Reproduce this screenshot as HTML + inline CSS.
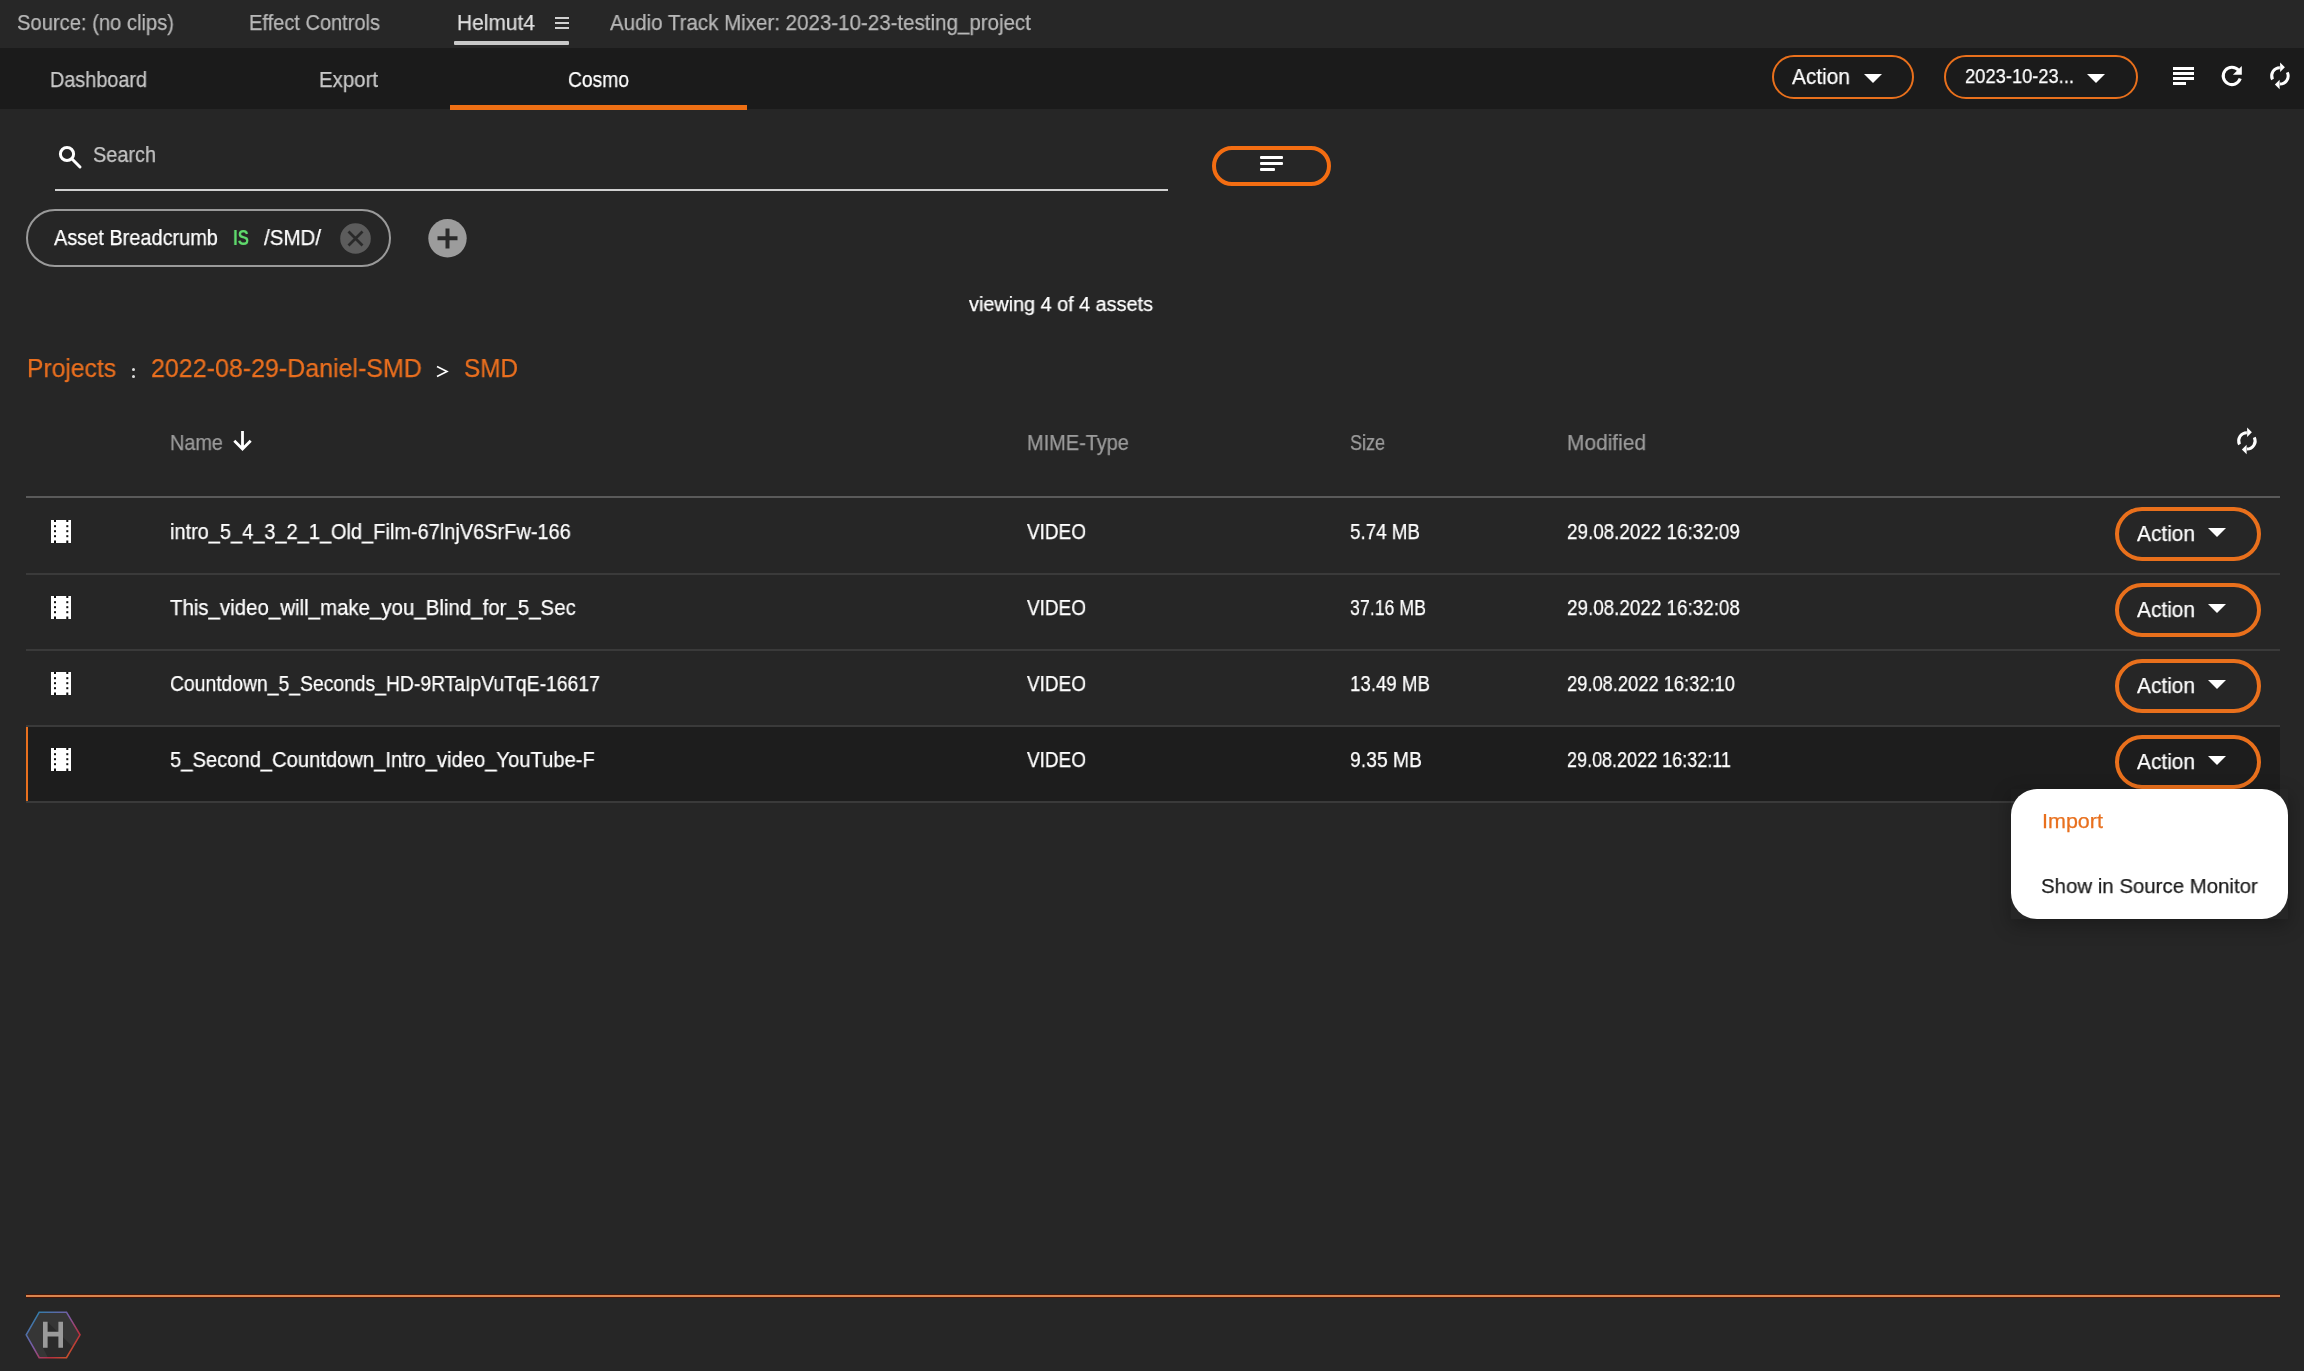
<!DOCTYPE html>
<html><head><meta charset="utf-8"><style>
html,body{margin:0;padding:0;}
body{width:2304px;height:1371px;position:relative;overflow:hidden;background:#262626;font-family:"Liberation Sans",sans-serif;}
.t{position:absolute;white-space:nowrap;margin:0;transform-origin:0 0;will-change:transform;}
.ab{position:absolute;display:block;}
.pill{position:absolute;border-radius:999px;}
</style></head><body>
<div class="ab" style="left:0;top:0;width:2304px;height:48px;background:#272727"></div>
<div class="ab" style="left:0;top:48px;width:2304px;height:61px;background:#1b1b1b"></div>
<div class="ab" style="left:454px;top:41px;width:115px;height:4px;background:#c8c8c8;border-radius:1px"></div>
<div class="ab" style="left:555px;top:17px;width:14px;height:2px;background:#d0d0d0"></div>
<div class="ab" style="left:555px;top:22px;width:14px;height:2px;background:#d0d0d0"></div>
<div class="ab" style="left:555px;top:27px;width:14px;height:2px;background:#d0d0d0"></div>
<div class="ab" style="left:450px;top:105px;width:297px;height:5px;background:#ee6f14"></div>
<div class="pill" style="left:1772px;top:55px;width:138.0px;height:40.0px;border:2.5px solid #e9701c;background:#1b1b1b"></div>
<svg class="ab" style="left:1864px;top:74px" width="18" height="9" viewBox="0 0 18 9"><path d="M0 0H18L9.0 9Z" fill="#fff"/></svg>
<div class="pill" style="left:1944px;top:55px;width:190.0px;height:40.0px;border:2.5px solid #e9701c;background:#1b1b1b"></div>
<svg class="ab" style="left:2087px;top:74px" width="18" height="9" viewBox="0 0 18 9"><path d="M0 0H18L9.0 9Z" fill="#fff"/></svg>
<div class="ab" style="left:2173px;top:67px;width:21px;height:2.7px;background:#fff"></div>
<div class="ab" style="left:2173px;top:72px;width:21px;height:2.7px;background:#fff"></div>
<div class="ab" style="left:2173px;top:77px;width:21px;height:2.7px;background:#fff"></div>
<div class="ab" style="left:2173px;top:82px;width:13px;height:2.7px;background:#fff"></div>
<svg class="ab" style="left:2214px;top:58px" width="36" height="36" viewBox="0 0 36 36">
<path d="M26.2 20.6 A8.7 8.7 0 1 1 24.6 12.3" fill="none" stroke="#fff" stroke-width="3.1"/>
<path d="M27.8 7.9 L27.8 16.8 L18.9 16.8 Z" fill="#fff"/></svg>
<svg class="ab" style="left:2262.0px;top:58.00000000000001px" width="36" height="36" viewBox="0 0 36 36">
<path d="M10.5 21.5 A8.2 8.2 0 0 1 17.9 9.7" fill="none" stroke="#fff" stroke-width="3"/>
<path d="M18.1 4.5 L22.9 9.2 L18.1 13.9 Z" fill="#fff"/>
<path d="M25.3 14.3 A8.2 8.2 0 0 1 17.9 26.1" fill="none" stroke="#fff" stroke-width="3"/>
<path d="M17.6 21.8 L12.9 26.5 L17.6 31.3 Z" fill="#fff"/>
</svg>
<svg class="ab" style="left:56px;top:143px" width="28" height="28" viewBox="0 0 28 28">
<circle cx="11" cy="11" r="6.6" fill="none" stroke="#fff" stroke-width="3"/>
<path d="M15.8 15.8 L24 24" stroke="#fff" stroke-width="3" stroke-linecap="round"/></svg>
<div class="ab" style="left:55px;top:189px;width:1113px;height:2px;background:#d0d0d0"></div>
<div class="pill" style="left:1212px;top:146px;width:111px;height:32px;border:4px solid #f36d12;background:#262626"></div>
<div class="ab" style="left:1260px;top:156px;width:23px;height:2.5px;background:#fff;border-radius:1px"></div>
<div class="ab" style="left:1260px;top:162px;width:23px;height:2.5px;background:#fff;border-radius:1px"></div>
<div class="ab" style="left:1260px;top:168px;width:15px;height:2.5px;background:#fff;border-radius:1px"></div>
<div class="pill" style="left:26px;top:209px;width:361px;height:54px;border:2px solid #9a9a9a;background:#262626"></div>
<svg class="ab" style="left:340px;top:223px" width="32" height="32" viewBox="0 0 32 32">
<circle cx="15.5" cy="15.5" r="15.3" fill="#5c5c5c"/>
<path d="M8.5 8.5 L22.5 22.5 M22.5 8.5 L8.5 22.5" stroke="#2a2a2a" stroke-width="2.8"/></svg>
<svg class="ab" style="left:428px;top:219px" width="40" height="40" viewBox="0 0 40 40">
<circle cx="19.5" cy="19.3" r="19.2" fill="#9c9c9c"/>
<path d="M19.5 9.5 V29.5 M9.5 19.3 H29.5" stroke="#2a2a2a" stroke-width="4"/></svg>
<div class="ab" style="left:132px;top:368px;width:3px;height:3px;background:#ddd;border-radius:50%"></div>
<div class="ab" style="left:132px;top:375px;width:3px;height:3px;background:#ddd;border-radius:50%"></div>
<svg class="ab" style="left:436px;top:365px" width="13" height="13" viewBox="0 0 13 13">
<path d="M1 1.5 L11 6.5 L1 11.5" fill="none" stroke="#fff" stroke-width="1.6"/></svg>
<svg class="ab" style="left:230px;top:429px" width="25" height="25" viewBox="0 0 25 25">
<path d="M12.5 2 V20 M4.3 11.8 L12.5 20 L20.7 11.8" fill="none" stroke="#fff" stroke-width="2.8"/></svg>
<svg class="ab" style="left:2228.6px;top:423.1px" width="36" height="36" viewBox="0 0 36 36">
<path d="M10.5 21.5 A8.2 8.2 0 0 1 17.9 9.7" fill="none" stroke="#fff" stroke-width="3"/>
<path d="M18.1 4.5 L22.9 9.2 L18.1 13.9 Z" fill="#fff"/>
<path d="M25.3 14.3 A8.2 8.2 0 0 1 17.9 26.1" fill="none" stroke="#fff" stroke-width="3"/>
<path d="M17.6 21.8 L12.9 26.5 L17.6 31.3 Z" fill="#fff"/>
</svg>
<div class="ab" style="left:26px;top:496px;width:2254px;height:2px;background:#5a5a5a"></div>
<div class="ab" style="left:26px;top:725px;width:2254px;height:76px;background:#1d1d1d"></div>
<div class="ab" style="left:26px;top:725px;width:2px;height:77px;background:#e8701e"></div>
<div class="ab" style="left:26px;top:573px;width:2254px;height:1.5px;background:#3a3a3a"></div>
<div class="ab" style="left:26px;top:649px;width:2254px;height:1.5px;background:#3a3a3a"></div>
<div class="ab" style="left:26px;top:725px;width:2254px;height:1.5px;background:#3a3a3a"></div>
<div class="ab" style="left:26px;top:801px;width:2254px;height:1.5px;background:#3a3a3a"></div>
<svg class="ab" style="left:51px;top:520px" width="20" height="23" viewBox="0 0 20 23"><rect width="20" height="23" fill="#fff"/><rect x="3" y="5.2" width="2" height="2" fill="#0e0e0e"/><rect x="15.3" y="5.2" width="2" height="2" fill="#0e0e0e"/><rect x="3" y="10.2" width="2" height="2" fill="#0e0e0e"/><rect x="15.3" y="10.2" width="2" height="2" fill="#0e0e0e"/><rect x="3" y="15.2" width="2" height="2" fill="#0e0e0e"/><rect x="15.3" y="15.2" width="2" height="2" fill="#0e0e0e"/><rect x="3" y="0" width="2" height="2" fill="#0e0e0e"/><rect x="15.3" y="0" width="2" height="2" fill="#0e0e0e"/><rect x="3" y="20.5" width="2" height="2.5" fill="#0e0e0e"/><rect x="15.3" y="20.5" width="2" height="2.5" fill="#0e0e0e"/></svg>
<div class="pill" style="left:2115px;top:507px;width:138px;height:46px;border:4px solid #e9701c;background:#262626"></div>
<svg class="ab" style="left:2208px;top:528px" width="18" height="9" viewBox="0 0 18 9"><path d="M0 0H18L9.0 9Z" fill="#fff"/></svg>
<svg class="ab" style="left:51px;top:596px" width="20" height="23" viewBox="0 0 20 23"><rect width="20" height="23" fill="#fff"/><rect x="3" y="5.2" width="2" height="2" fill="#0e0e0e"/><rect x="15.3" y="5.2" width="2" height="2" fill="#0e0e0e"/><rect x="3" y="10.2" width="2" height="2" fill="#0e0e0e"/><rect x="15.3" y="10.2" width="2" height="2" fill="#0e0e0e"/><rect x="3" y="15.2" width="2" height="2" fill="#0e0e0e"/><rect x="15.3" y="15.2" width="2" height="2" fill="#0e0e0e"/><rect x="3" y="0" width="2" height="2" fill="#0e0e0e"/><rect x="15.3" y="0" width="2" height="2" fill="#0e0e0e"/><rect x="3" y="20.5" width="2" height="2.5" fill="#0e0e0e"/><rect x="15.3" y="20.5" width="2" height="2.5" fill="#0e0e0e"/></svg>
<div class="pill" style="left:2115px;top:583px;width:138px;height:46px;border:4px solid #e9701c;background:#262626"></div>
<svg class="ab" style="left:2208px;top:604px" width="18" height="9" viewBox="0 0 18 9"><path d="M0 0H18L9.0 9Z" fill="#fff"/></svg>
<svg class="ab" style="left:51px;top:672px" width="20" height="23" viewBox="0 0 20 23"><rect width="20" height="23" fill="#fff"/><rect x="3" y="5.2" width="2" height="2" fill="#0e0e0e"/><rect x="15.3" y="5.2" width="2" height="2" fill="#0e0e0e"/><rect x="3" y="10.2" width="2" height="2" fill="#0e0e0e"/><rect x="15.3" y="10.2" width="2" height="2" fill="#0e0e0e"/><rect x="3" y="15.2" width="2" height="2" fill="#0e0e0e"/><rect x="15.3" y="15.2" width="2" height="2" fill="#0e0e0e"/><rect x="3" y="0" width="2" height="2" fill="#0e0e0e"/><rect x="15.3" y="0" width="2" height="2" fill="#0e0e0e"/><rect x="3" y="20.5" width="2" height="2.5" fill="#0e0e0e"/><rect x="15.3" y="20.5" width="2" height="2.5" fill="#0e0e0e"/></svg>
<div class="pill" style="left:2115px;top:659px;width:138px;height:46px;border:4px solid #e9701c;background:#262626"></div>
<svg class="ab" style="left:2208px;top:680px" width="18" height="9" viewBox="0 0 18 9"><path d="M0 0H18L9.0 9Z" fill="#fff"/></svg>
<svg class="ab" style="left:51px;top:748px" width="20" height="23" viewBox="0 0 20 23"><rect width="20" height="23" fill="#fff"/><rect x="3" y="5.2" width="2" height="2" fill="#0e0e0e"/><rect x="15.3" y="5.2" width="2" height="2" fill="#0e0e0e"/><rect x="3" y="10.2" width="2" height="2" fill="#0e0e0e"/><rect x="15.3" y="10.2" width="2" height="2" fill="#0e0e0e"/><rect x="3" y="15.2" width="2" height="2" fill="#0e0e0e"/><rect x="15.3" y="15.2" width="2" height="2" fill="#0e0e0e"/><rect x="3" y="0" width="2" height="2" fill="#0e0e0e"/><rect x="15.3" y="0" width="2" height="2" fill="#0e0e0e"/><rect x="3" y="20.5" width="2" height="2.5" fill="#0e0e0e"/><rect x="15.3" y="20.5" width="2" height="2.5" fill="#0e0e0e"/></svg>
<div class="pill" style="left:2115px;top:735px;width:138px;height:46px;border:4px solid #e9701c;background:#1d1d1d"></div>
<svg class="ab" style="left:2208px;top:756px" width="18" height="9" viewBox="0 0 18 9"><path d="M0 0H18L9.0 9Z" fill="#fff"/></svg>
<div class="ab" style="left:26px;top:1294px;width:2254px;height:4px;background:#4a1606"></div>
<div class="ab" style="left:26px;top:1295px;width:2254px;height:2px;background:#d8844e"></div>
<svg class="ab" style="left:24px;top:1310px" width="58" height="50" viewBox="0 0 58 50">
<defs><linearGradient id="lg" x1="0" y1="0" x2="1" y2="1">
<stop offset="0" stop-color="#1a88aa"/><stop offset="0.45" stop-color="#7d5aa6"/><stop offset="0.72" stop-color="#b82e40"/><stop offset="1" stop-color="#cf6a1c"/></linearGradient>
<clipPath id="hc"><path d="M2.2 24.8 L15.2 2.2 H42.5 L56 24.8 L42.5 47.7 H15.2 Z"/></clipPath></defs>
<path d="M2.2 24.8 L15.2 2.2 H42.5 L56 24.8 L42.5 47.7 H15.2 Z" fill="#363636"/>
<g clip-path="url(#hc)"><path d="M23.6 12 L60 48 V60 H30 L19 37.7 H23.6 Z" fill="#2a2a2a"/></g>
<path d="M2.2 24.8 L15.2 2.2 H42.5 L56 24.8 L42.5 47.7 H15.2 Z" fill="none" stroke="url(#lg)" stroke-width="1.6"/>
<path d="M19 11.8 H23.6 V21.8 H34.4 V11.8 H39 V37.7 H34.4 V26.4 H23.6 V37.7 H19 Z" fill="#9a9a9a"/>
</svg>
<div class="ab" style="left:2011px;top:789px;width:277px;height:130px;box-shadow:0 6px 18px rgba(0,0,0,0.3)"></div><div class="ab" style="left:2011px;top:789px;width:277px;height:130px;background:#fff;border-radius:26px"></div>
<div class="t" style="left:17.00px;top:11.06px;font-size:21.80px;line-height:24.36px;transform:scaleX(0.9255);color:#b8b8b8;-webkit-text-stroke:0.25px #b8b8b8;">Source: (no clips)</div>
<div class="t" style="left:249.00px;top:11.06px;font-size:21.80px;line-height:24.36px;transform:scaleX(0.9187);color:#b8b8b8;-webkit-text-stroke:0.25px #b8b8b8;">Effect Controls</div>
<div class="t" style="left:457.00px;top:11.06px;font-size:21.80px;line-height:24.36px;transform:scaleX(0.9607);color:#dedede;-webkit-text-stroke:0.25px #dedede;">Helmut4</div>
<div class="t" style="left:610.00px;top:11.06px;font-size:21.80px;line-height:24.36px;transform:scaleX(0.9415);color:#b8b8b8;-webkit-text-stroke:0.25px #b8b8b8;">Audio Track Mixer: 2023-10-23-testing_project</div>
<div class="t" style="left:50.00px;top:68.06px;font-size:21.80px;line-height:24.36px;transform:scaleX(0.9095);color:#c8c8c8;-webkit-text-stroke:0.25px #c8c8c8;">Dashboard</div>
<div class="t" style="left:319.00px;top:68.06px;font-size:21.80px;line-height:24.36px;transform:scaleX(0.9364);color:#c8c8c8;-webkit-text-stroke:0.25px #c8c8c8;">Export</div>
<div class="t" style="left:568.00px;top:68.06px;font-size:21.80px;line-height:24.36px;transform:scaleX(0.8832);color:#ffffff;-webkit-text-stroke:0.25px #ffffff;">Cosmo</div>
<div class="t" style="left:1792.00px;top:63.80px;font-size:22.53px;line-height:25.17px;transform:scaleX(0.9264);color:#ffffff;-webkit-text-stroke:0.25px #ffffff;">Action</div>
<div class="t" style="left:1965.00px;top:64.12px;font-size:21.08px;line-height:23.55px;transform:scaleX(0.8694);color:#ffffff;-webkit-text-stroke:0.25px #ffffff;">2023-10-23...</div>
<div class="t" style="left:93.00px;top:143.46px;font-size:21.80px;line-height:24.36px;transform:scaleX(0.9121);color:#c4c4c4;-webkit-text-stroke:0.25px #c4c4c4;">Search</div>
<div class="t" style="left:54.00px;top:224.94px;font-size:22.38px;line-height:25.01px;transform:scaleX(0.8907);color:#ffffff;-webkit-text-stroke:0.25px #ffffff;">Asset Breadcrumb</div>
<div class="t" style="left:233.00px;top:224.94px;font-size:22.38px;line-height:25.01px;transform:scaleX(0.7564);color:#5fd96c;-webkit-text-stroke:0.25px #5fd96c;font-weight:bold;-webkit-text-stroke:0;">IS</div>
<div class="t" style="left:264.00px;top:224.94px;font-size:22.38px;line-height:25.01px;transform:scaleX(0.9167);color:#ffffff;-webkit-text-stroke:0.25px #ffffff;">/SMD/</div>
<div class="t" style="left:969.00px;top:292.78px;font-size:20.35px;line-height:22.73px;transform:scaleX(0.9741);color:#ffffff;-webkit-text-stroke:0.25px #ffffff;">viewing 4 of 4 assets</div>
<div class="t" style="left:27.00px;top:353.51px;font-size:26.16px;line-height:29.23px;transform:scaleX(0.9418);color:#ea6f1f;-webkit-text-stroke:0.25px #ea6f1f;">Projects</div>
<div class="t" style="left:151.00px;top:353.51px;font-size:26.16px;line-height:29.23px;transform:scaleX(0.9557);color:#ea6f1f;-webkit-text-stroke:0.25px #ea6f1f;">2022-08-29-Daniel-SMD</div>
<div class="t" style="left:464.00px;top:353.51px;font-size:26.16px;line-height:29.23px;transform:scaleX(0.9289);color:#ea6f1f;-webkit-text-stroke:0.25px #ea6f1f;">SMD</div>
<div class="t" style="left:170.00px;top:430.80px;font-size:22.09px;line-height:24.68px;transform:scaleX(0.8992);color:#9c9c9c;-webkit-text-stroke:0.25px #9c9c9c;">Name</div>
<div class="t" style="left:1027.00px;top:430.80px;font-size:22.09px;line-height:24.68px;transform:scaleX(0.9031);color:#9c9c9c;-webkit-text-stroke:0.25px #9c9c9c;">MIME-Type</div>
<div class="t" style="left:1350.00px;top:430.80px;font-size:22.09px;line-height:24.68px;transform:scaleX(0.8145);color:#9c9c9c;-webkit-text-stroke:0.25px #9c9c9c;">Size</div>
<div class="t" style="left:1567.00px;top:430.80px;font-size:22.09px;line-height:24.68px;transform:scaleX(0.9460);color:#9c9c9c;-webkit-text-stroke:0.25px #9c9c9c;">Modified</div>
<div class="t" style="left:170.00px;top:519.73px;font-size:21.51px;line-height:24.03px;transform:scaleX(0.9289);color:#ffffff;-webkit-text-stroke:0.25px #ffffff;">intro_5_4_3_2_1_Old_Film-67lnjV6SrFw-166</div>
<div class="t" style="left:1027.00px;top:519.73px;font-size:21.51px;line-height:24.03px;transform:scaleX(0.8813);color:#ffffff;-webkit-text-stroke:0.25px #ffffff;">VIDEO</div>
<div class="t" style="left:1350.00px;top:519.73px;font-size:21.51px;line-height:24.03px;transform:scaleX(0.8738);color:#ffffff;-webkit-text-stroke:0.25px #ffffff;">5.74 MB</div>
<div class="t" style="left:1567.00px;top:519.73px;font-size:21.51px;line-height:24.03px;transform:scaleX(0.8765);color:#ffffff;-webkit-text-stroke:0.25px #ffffff;">29.08.2022 16:32:09</div>
<div class="t" style="left:2136.50px;top:521.99px;font-size:21.22px;line-height:23.71px;transform:scaleX(0.9835);color:#ffffff;-webkit-text-stroke:0.25px #ffffff;">Action</div>
<div class="t" style="left:170.00px;top:595.73px;font-size:21.51px;line-height:24.03px;transform:scaleX(0.9510);color:#ffffff;-webkit-text-stroke:0.25px #ffffff;">This_video_will_make_you_Blind_for_5_Sec</div>
<div class="t" style="left:1027.00px;top:595.73px;font-size:21.51px;line-height:24.03px;transform:scaleX(0.8813);color:#ffffff;-webkit-text-stroke:0.25px #ffffff;">VIDEO</div>
<div class="t" style="left:1350.00px;top:595.73px;font-size:21.51px;line-height:24.03px;transform:scaleX(0.8255);color:#ffffff;-webkit-text-stroke:0.25px #ffffff;">37.16 MB</div>
<div class="t" style="left:1567.00px;top:595.73px;font-size:21.51px;line-height:24.03px;transform:scaleX(0.8765);color:#ffffff;-webkit-text-stroke:0.25px #ffffff;">29.08.2022 16:32:08</div>
<div class="t" style="left:2136.50px;top:597.99px;font-size:21.22px;line-height:23.71px;transform:scaleX(0.9835);color:#ffffff;-webkit-text-stroke:0.25px #ffffff;">Action</div>
<div class="t" style="left:170.00px;top:671.73px;font-size:21.51px;line-height:24.03px;transform:scaleX(0.8989);color:#ffffff;-webkit-text-stroke:0.25px #ffffff;">Countdown_5_Seconds_HD-9RTaIpVuTqE-16617</div>
<div class="t" style="left:1027.00px;top:671.73px;font-size:21.51px;line-height:24.03px;transform:scaleX(0.8813);color:#ffffff;-webkit-text-stroke:0.25px #ffffff;">VIDEO</div>
<div class="t" style="left:1350.00px;top:671.73px;font-size:21.51px;line-height:24.03px;transform:scaleX(0.8689);color:#ffffff;-webkit-text-stroke:0.25px #ffffff;">13.49 MB</div>
<div class="t" style="left:1567.00px;top:671.73px;font-size:21.51px;line-height:24.03px;transform:scaleX(0.8512);color:#ffffff;-webkit-text-stroke:0.25px #ffffff;">29.08.2022 16:32:10</div>
<div class="t" style="left:2136.50px;top:673.99px;font-size:21.22px;line-height:23.71px;transform:scaleX(0.9835);color:#ffffff;-webkit-text-stroke:0.25px #ffffff;">Action</div>
<div class="t" style="left:170.00px;top:747.73px;font-size:21.51px;line-height:24.03px;transform:scaleX(0.9384);color:#ffffff;-webkit-text-stroke:0.25px #ffffff;">5_Second_Countdown_Intro_video_YouTube-F</div>
<div class="t" style="left:1027.00px;top:747.73px;font-size:21.51px;line-height:24.03px;transform:scaleX(0.8813);color:#ffffff;-webkit-text-stroke:0.25px #ffffff;">VIDEO</div>
<div class="t" style="left:1350.00px;top:747.73px;font-size:21.51px;line-height:24.03px;transform:scaleX(0.8988);color:#ffffff;-webkit-text-stroke:0.25px #ffffff;">9.35 MB</div>
<div class="t" style="left:1567.00px;top:747.73px;font-size:21.51px;line-height:24.03px;transform:scaleX(0.8377);color:#ffffff;-webkit-text-stroke:0.25px #ffffff;">29.08.2022 16:32:11</div>
<div class="t" style="left:2136.50px;top:749.99px;font-size:21.22px;line-height:23.71px;transform:scaleX(0.9835);color:#ffffff;-webkit-text-stroke:0.25px #ffffff;">Action</div>
<div class="t" style="left:2042.00px;top:809.38px;font-size:20.78px;line-height:23.22px;transform:scaleX(1.0356);color:#e8701e;-webkit-text-stroke:0.25px #e8701e;">Import</div>
<div class="t" style="left:2041.00px;top:874.38px;font-size:20.78px;line-height:23.22px;transform:scaleX(0.9834);color:#1c1c1c;-webkit-text-stroke:0.25px #1c1c1c;">Show in Source Monitor</div>
</body></html>
